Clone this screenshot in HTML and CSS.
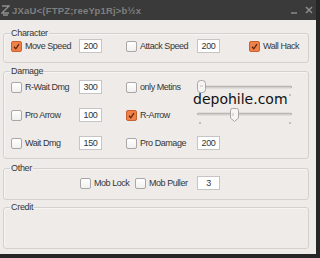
FILE: index.html
```html
<!DOCTYPE html>
<html lang="en">
<head>
  <meta charset="UTF-8">
  <title>JXaU Hack</title>
  <link rel="stylesheet" href="styles.css">
</head>
<body>

  <div class="window">
    <div class="titlebar">
      <svg class="app-icon" width="9" height="12" viewBox="0 0 9 12">
        <path d="M1 2 H8 L1 9 H8 M2 11 H7" fill="none" stroke="#8e8e8e" stroke-width="1.4"/>
      </svg>
      <span class="title">JXaU&lt;(FTPZ;reeYp1Rj&gt;b½x</span>
      <span class="controls">
        <svg width="7" height="7" viewBox="0 0 7 7"><path d="M0 6 H6" stroke="#8a8a8a" stroke-width="1.5"/></svg>
        <svg width="8" height="8" viewBox="0 0 8 8"><path d="M1 1 L7 7 M7 1 L1 7" stroke="#8a8a8a" stroke-width="1.6"/></svg>
      </span>
    </div>

    <div class="client">
      <div class="group character">
        <div class="group-title">Character</div>
        <div class="grid">
          <label class="check on"><span class="box"></span>Move Speed</label>
          <input class="field" type="text" value="200">
          <label class="check"><span class="box"></span>Attack Speed</label>
          <input class="field" type="text" value="200">
          <label class="check on"><span class="box"></span>Wall Hack</label>
        </div>
      </div>

      <div class="group damage">
        <div class="group-title">Damage</div>
        <div class="grid">
          <label class="check"><span class="box"></span>R-Wait Dmg</label>
          <input class="field" type="text" value="300">
          <label class="check"><span class="box"></span>only Metins</label>
          <svg class="slider" width="95" height="16" viewBox="0 0 95 16">
            <path d="M1 7 H94" stroke="#b9b6b4" stroke-width="2.4" stroke-linecap="round"/>
            <path d="M1 7.5 H94" stroke="#d9d6d4" stroke-width="0.8"/>
            <rect x="0.5" y="0.5" width="8" height="12" rx="3" fill="#f6f5f4" stroke="#a9a6a4"/>
            <path d="M3 6 H6" stroke="#c5c2c0"/>
            <circle cx="93" cy="15" r="0.7" fill="#777"/>
          </svg>

          <label class="check"><span class="box"></span>Pro Arrow</label>
          <input class="field" type="text" value="100">
          <label class="check on"><span class="box"></span>R-Arrow</label>
          <svg class="slider" width="95" height="16" viewBox="0 0 95 16">
            <path d="M1 6 H94" stroke="#b9b6b4" stroke-width="2.4" stroke-linecap="round"/>
            <path d="M1 6.5 H94" stroke="#d9d6d4" stroke-width="0.8"/>
            <path d="M33.5 2.5 Q33.5 0.5 35.5 0.5 H39.5 Q41.5 0.5 41.5 2.5 V10 L37.5 13.5 L33.5 10 Z" fill="#f6f5f4" stroke="#a9a6a4"/>
            <path d="M36 5 V8" stroke="#c5c2c0"/>
            <circle cx="3" cy="15" r="0.7" fill="#777"/>
            <circle cx="93" cy="15" r="0.7" fill="#777"/>
          </svg>

          <label class="check"><span class="box"></span>Wait Dmg</label>
          <input class="field" type="text" value="150">
          <label class="check"><span class="box"></span>Pro Damage</label>
          <input class="field" type="text" value="200">
        </div>
      </div>

      <div class="group other">
        <div class="group-title">Other</div>
        <div class="other-row">
          <label class="check lock"><span class="box"></span>Mob Lock</label>
          <label class="check puller"><span class="box"></span>Mob Puller</label>
          <input class="field" type="text" value="3">
        </div>
      </div>

      <div class="group credit">
        <div class="group-title">Credit</div>
      </div>
    </div>

    <div class="watermark">depohile.com</div>
  </div>

</body>
</html>
```

FILE: styles.css
```css
body {
  margin: 0;
  background: #262626;
  font-family: "Liberation Sans", Arial, sans-serif;
  color: #363636;
}

.window {
  position: relative;
  width: 316px;
  height: 254px;
  background: #eeebe9;
  overflow: hidden;
}

.titlebar {
  height: 20px;
  background: #3a3a3a;
  display: flex;
  align-items: center;
  color: #7f7f7f;
}

.app-icon {
  margin-left: 1px;
  margin-right: 2px;
}

.title {
  font-weight: bold;
  font-size: 9.5px;
  letter-spacing: 0.2px;
}

.controls {
  margin-left: auto;
  margin-right: 3px;
  display: flex;
  gap: 7px;
  align-items: center;
}

.client {
  display: flex;
  flex-direction: column;
}

.group {
  border: 1px solid #d3d0ce;
  border-radius: 3px;
  margin-left: 3px;
  width: 304px;
  box-shadow: inset 1px 1px 0 #f7f5f4;
}

.group-title {
  display: table;
  margin: -6px 0 0 6px;
  padding: 0 1px;
  height: 10px;
  line-height: 10px;
  font-size: 9px;
  letter-spacing: -0.3px;
  background: #eeebe9;
}

.character {
  margin-top: 13px;
  height: 28px;
}

.damage {
  margin-top: 8px;
  height: 86px;
}

.other {
  margin-top: 9px;
  height: 30px;
}

.credit {
  margin-top: 7px;
  height: 40px;
}

.grid {
  display: grid;
  grid-template-columns: 68px 47px 71px 52px auto;
  grid-auto-rows: 14px;
  row-gap: 14px;
  padding-left: 7px;
  align-items: center;
}

.character .grid {
  margin-top: 1px;
}

.damage .grid {
  margin-top: 4px;
}

.check {
  display: flex;
  align-items: center;
  gap: 3px;
  height: 14px;
  font-size: 9px;
  letter-spacing: -0.45px;
  white-space: nowrap;
}

.box {
  width: 9px;
  height: 9px;
  border: 1px solid #a9a7a5;
  border-radius: 2px;
  background: linear-gradient(#ffffff, #f1f0ef);
  flex: none;
}

.check.on .box {
  border-color: #c8612e;
  background: #ef8048 url("data:image/svg+xml,%3Csvg xmlns='http://www.w3.org/2000/svg' width='9' height='9'%3E%3Cpath d='M2 4.8 L3.8 6.8 L7 2.2' fill='none' stroke='%235a2810' stroke-width='1.3'/%3E%3C/svg%3E") center no-repeat;
}

.field {
  box-sizing: border-box;
  width: 23px;
  height: 14px;
  padding: 0;
  border: 1px solid #c7c5c3;
  background: #fff;
  font-family: inherit;
  font-size: 9px;
  letter-spacing: -0.3px;
  color: #333;
  text-align: center;
}

.slider {
  grid-column: 4 / span 2;
  align-self: start;
}

.other-row {
  display: flex;
  align-items: center;
  margin-top: 3px;
  padding-left: 76px;
}

.lock {
  width: 55px;
}

.puller {
  width: 62px;
}

.watermark {
  position: absolute;
  left: 193px;
  top: 91px;
  font-family: "DejaVu Sans", sans-serif;
  font-size: 14px;
  line-height: 16px;
  color: #111;
}
```
